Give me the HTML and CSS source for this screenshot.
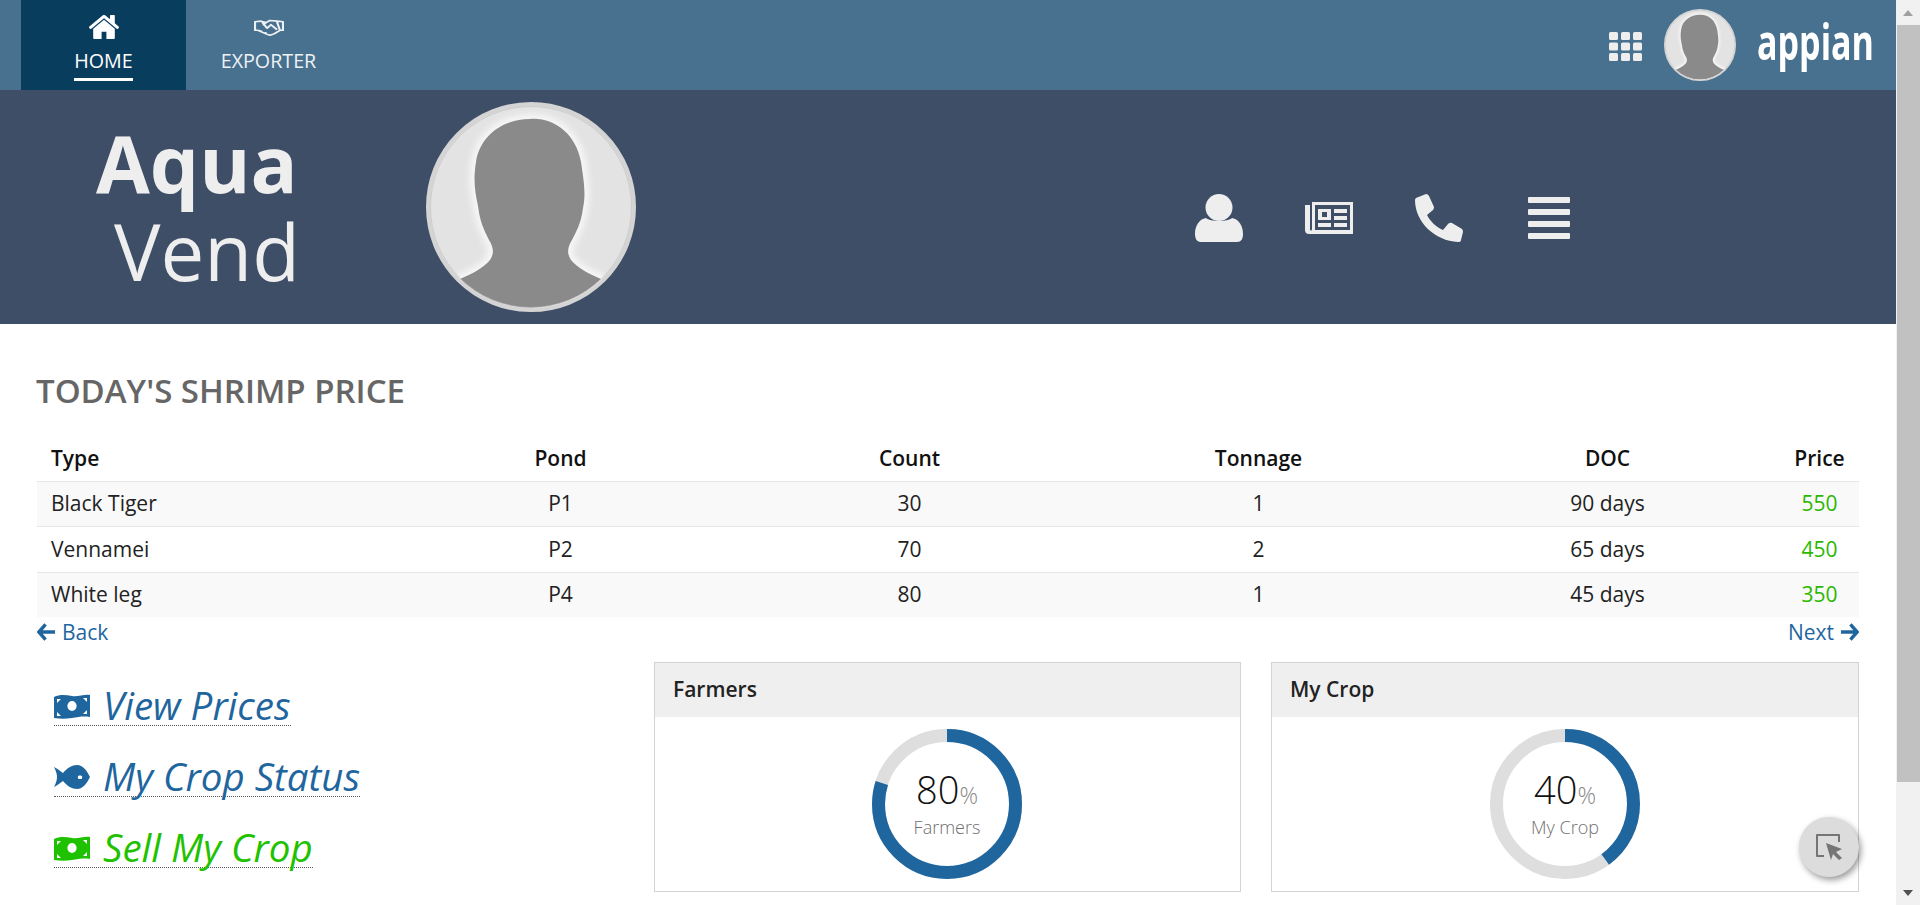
FILE: index.html
```html
<!DOCTYPE html>
<html lang="en">
<head>
    <meta charset="UTF-8">
    <meta name="viewport" content="width=device-width, initial-scale=1.0">
    <title>Aqua Vend</title>
    <link rel="stylesheet" href="styles.css">
</head>
<body>
    <svg class="defs" width="0" height="0">
        <filter id="soft" x="-20%" y="-20%" width="140%" height="140%"><feGaussianBlur stdDeviation="3"/></filter>
        <clipPath id="avatarClip"><circle cx="105" cy="105" r="101"/></clipPath>
        <symbol id="avatar" viewBox="0 0 210 210">
            <circle cx="105" cy="105" r="103" fill="#e3e3e3" stroke="#d4d4d4" stroke-width="4"/>
            <g clip-path="url(#avatarClip)">
                <path d="M104 17C128 15 150 32 155 60C158 80 160 92 157 106C155 122 150 130 146 138C141 146 141 152 145 158C152 166 163 172 175 177L175 215H34L34 177C46 172 57 166 64 158C68 152 68 146 63 138C58 128 54 120 52 104C49 90 47 78 50 60C54 33 78 17 104 17Z" fill="#f6f6f6" stroke="#f6f6f6" stroke-width="10" filter="url(#soft)"/>
                <path d="M104 17C128 15 150 32 155 60C158 80 160 92 157 106C155 122 150 130 146 138C141 146 141 152 145 158C152 166 163 172 175 177A101 101 0 0 1 34 177C46 172 57 166 64 158C68 152 68 146 63 138C58 128 54 120 52 104C49 90 47 78 50 60C54 33 78 17 104 17Z" fill="#8a8a8a"/>
            </g>
            <circle cx="105" cy="105" r="100.500" fill="none" stroke="#bdbdbd" stroke-width="0.6"/>
        </symbol>
        <symbol id="money" viewBox="0 0 36 26">
            <path fill-rule="evenodd" d="M0 4C6 1 12 2 18 3C24 4 30 1 36 2V24C30 23 24 24 18 25C12 26 6 26 0 25ZM18 8A4.600 5 0 1 0 18 18A4.600 5 0 1 0 18 8ZM3 6V10L7 6ZM33 5H29L33 9ZM3 19V23H7ZM33 17L29 21H33Z"/>
        </symbol>
    </svg>

    <div class="page">
        <nav class="topbar">
            <a class="tab tab-active">
                <div class="tab-icon-box">
                    <svg class="tab-icon" viewBox="96 256 1600 1280"><path d="M1472 992v480q0 26-19 45t-45 19h-384v-384h-256v384h-384q-26 0-45-19t-19-45v-480q0-1 .5-3t.5-3l575-474 575 474q1 2 1 6zm223-69l-62 74q-8 9-21 11h-3q-13 0-21-7l-692-577-692 577q-12 8-24 7-13-2-21-11l-62-74q-8-10-7-23.5t11-21.5l719-599q32-26 76-26t76 26l244 204v-195q0-14 9-23t23-9h192q14 0 23 9t9 23v408l219 182q10 8 11 21.5t-7 23.5z"/></svg>
                </div>
                <span class="tab-label">HOME</span>
            </a>
            <a class="tab">
                <div class="tab-icon-box">
                    <svg class="tab-icon-shake" viewBox="0 0 30 24" preserveAspectRatio="none"><path d="M1 4L7 3L12 5L16 2L23 3L29 4V16L26 16L20 21L16 23L12 21L4 16L1 16ZM8 4L13 13L17 8L23 15M12 5L9 9M5 16L8 18M11 19L13 21M23 4L26 16" fill="none" stroke="#eef2f5" stroke-width="2.200" stroke-linejoin="round"/></svg>
                </div>
                <span class="tab-label">EXPORTER</span>
            </a>
            <div class="topbar-right">
                <svg class="grid-icon" viewBox="0 0 33 29"><rect x="0" y="0" width="9" height="8" rx="1.500"/><rect x="12" y="0" width="9" height="8" rx="1.500"/><rect x="24" y="0" width="9" height="8" rx="1.500"/><rect x="0" y="10.500" width="9" height="8" rx="1.500"/><rect x="12" y="10.500" width="9" height="8" rx="1.500"/><rect x="24" y="10.500" width="9" height="8" rx="1.500"/><rect x="0" y="21" width="9" height="8" rx="1.500"/><rect x="12" y="21" width="9" height="8" rx="1.500"/><rect x="24" y="21" width="9" height="8" rx="1.500"/></svg>
                <svg class="avatar-small"><use href="#avatar"/></svg>
                <div class="logo"><span class="logo-text">appian</span></div>
            </div>
        </nav>

        <header class="banner">
            <div class="brand">
                <div class="brand-top">Aqua</div>
                <div class="brand-bottom">Vend</div>
            </div>
            <svg class="avatar-big"><use href="#avatar"/></svg>
            <div class="banner-icons">
                <svg class="banner-icon" viewBox="0 0 48 48"><ellipse cx="24" cy="13.500" rx="13.500" ry="13.500"/><path d="M0 40C0 32 4 25 11 24C15 28 33 28 37 24C44 25 48 32 48 40C48 45 46 48 42 48H6C2 48 0 45 0 40Z"/></svg>
                <svg class="banner-icon" viewBox="0 0 48 48"><path fill-rule="evenodd" d="M7 8H48V40H4C1 40 0 38 0 36V11H5V35C5 37 7 37 7 35ZM10 11V36H45V11Z"/><path fill-rule="evenodd" d="M13 15H26V26H13ZM17 18V23H22V18Z"/><rect x="29" y="15" width="13" height="4"/><rect x="29" y="22" width="13" height="4"/><rect x="13" y="29" width="13" height="4"/><rect x="29" y="29" width="13" height="4"/></svg>
                <svg class="banner-icon" viewBox="0 0 48 48"><path d="M1 4L11 0Q13 0 14 2L19 13Q19 15 18 16L12 21C15 27 21 33 28 36L33 30Q35 28 37 29L47 35Q48 36 48 38L46 46Q46 48 43 48C20 47 0 28 0 6Q0 5 1 4Z"/></svg>
                <svg class="banner-icon" viewBox="0 0 48 48"><rect x="3" y="3" width="42" height="6" rx="1"/><rect x="3" y="15" width="42" height="6" rx="1"/><rect x="3" y="27" width="42" height="6" rx="1"/><rect x="3" y="39" width="42" height="6" rx="1"/></svg>
            </div>
        </header>

        <main class="content">
            <h2 class="title">TODAY'S SHRIMP PRICE</h2>

            <table class="price-table">
                <colgroup>
                    <col class="col-wide"><col class="col-wide"><col class="col-wide"><col class="col-wide"><col class="col-wide"><col>
                </colgroup>
                <thead>
                    <tr><th class="left">Type</th><th>Pond</th><th>Count</th><th>Tonnage</th><th>DOC</th><th class="price-head">Price</th></tr>
                </thead>
                <tbody>
                    <tr><td class="left">Black Tiger</td><td>P1</td><td>30</td><td>1</td><td>90 days</td><td class="price">550</td></tr>
                    <tr><td class="left">Vennamei</td><td>P2</td><td>70</td><td>2</td><td>65 days</td><td class="price">450</td></tr>
                    <tr><td class="left">White leg</td><td>P4</td><td>80</td><td>1</td><td>45 days</td><td class="price">350</td></tr>
                </tbody>
            </table>

            <div class="pager">
                <a class="pager-link">
                    <svg class="arrow" viewBox="0 0 20 18"><path d="M9 1L2 9L9 17M2 9H19" fill="none" stroke="currentColor" stroke-width="3.600"/></svg>
                    Back
                </a>
                <a class="pager-link">
                    Next
                    <svg class="arrow" viewBox="0 0 20 18"><path d="M11 1L18 9L11 17M18 9H1" fill="none" stroke="currentColor" stroke-width="3.600"/></svg>
                </a>
            </div>

            <div class="lower">
                <div class="links">
                    <a class="big-link">
                        <svg class="link-icon"><use href="#money"/></svg>
                        View Prices
                    </a>
                    <a class="big-link">
                        <svg class="link-icon" viewBox="0 0 36 26"><path fill-rule="evenodd" d="M0 3C4 5 6 7 9 9C13 4 18 1 23 1C29 1 33 7 36 13C33 19 29 25 23 25C18 25 13 22 9 17C6 19 4 21 0 23C2 19 3 16 3 13C3 10 2 7 0 3ZM26 11.500A1.800 1.800 0 1 0 26 15A1.800 1.800 0 1 0 26 11.500Z"/></svg>
                        My Crop Status
                    </a>
                    <a class="big-link big-link-green">
                        <svg class="link-icon"><use href="#money"/></svg>
                        Sell My Crop
                    </a>
                </div>

                <section class="card card-first">
                    <h3 class="card-head">Farmers</h3>
                    <div class="card-body">
                        <div class="donut">
                            <svg class="donut-ring" viewBox="0 0 150 150">
                                <circle class="ring-back" cx="75" cy="75" r="68.500"/>
                                <circle class="ring-value" cx="75" cy="75" r="68.500" pathLength="100" stroke-dasharray="80 100"/>
                            </svg>
                            <div class="donut-text">
                                <div class="donut-num">80<span class="donut-pct">%</span></div>
                                <div class="donut-label">Farmers</div>
                            </div>
                        </div>
                    </div>
                </section>

                <section class="card card-last">
                    <h3 class="card-head">My Crop</h3>
                    <div class="card-body">
                        <div class="donut">
                            <svg class="donut-ring" viewBox="0 0 150 150">
                                <circle class="ring-back" cx="75" cy="75" r="68.500"/>
                                <circle class="ring-value" cx="75" cy="75" r="68.500" pathLength="100" stroke-dasharray="40 100"/>
                            </svg>
                            <div class="donut-text">
                                <div class="donut-num">40<span class="donut-pct">%</span></div>
                                <div class="donut-label">My Crop</div>
                            </div>
                        </div>
                    </div>
                </section>
            </div>

            <button class="fab">
                <svg viewBox="0 0 28 28" width="28" height="28"><path d="M9 23H2V2H24V9" fill="none" stroke="#757575" stroke-width="2" stroke-linejoin="round"/><path d="M11 10L27 16L21 19L27 25L24 27L18 21L16 27Z" fill="#757575"/></svg>
            </button>
        </main>
    </div>

    <div class="scrollbar">
        <div class="scroll-btn"><span class="arrow-up"></span></div>
        <div class="scroll-thumb"></div>
        <div class="scroll-track"></div>
        <div class="scroll-btn"><span class="arrow-down"></span></div>
    </div>
</body>
</html>
```

FILE: styles.css
```css
html, body { height: 100%; overflow: hidden; }
body {
    margin: 0;
    display: flex;
    font-family: "Open Sans", "Noto Sans", sans-serif;
    font-size: 21px;
    color: #222;
    background: #fff;
}
.defs { display: block; height: 0; width: 0; flex: none; }
.page { flex: 1; min-width: 0; display: flex; flex-direction: column; }

/* top nav */
.topbar {
    height: 90px;
    flex: none;
    display: flex;
    padding-left: 21px;
    background: #48708f;
}
.tab {
    width: 165px;
    display: flex;
    flex-direction: column;
    align-items: center;
    color: #eef2f5;
    font-size: 19.700px;
}
.tab-active { background: #083d5e; color: #fff; }
.tab-icon-box { height: 24px; margin-top: 15px; display: flex; align-items: center; flex: none; }
.tab-icon { width: 30px; height: 24px; fill: #fff; }
.tab-icon-shake { width: 30px; height: 17px; }
.tab-label { margin-top: 7px; line-height: 30px; padding-bottom: 2px; }
.tab-active .tab-label { border-bottom: 3px solid #fff; }
.topbar-right { margin-left: auto; display: flex; align-items: center; padding-right: 22px; }
.grid-icon { width: 33px; height: 29px; fill: #eee; margin-right: 22px; margin-top: 3px; }
.avatar-small { width: 72px; height: 72px; margin-right: 21px; }
.logo { width: 117px; height: 70px; margin-bottom: 8px; }
.logo-text {
    display: block;
    width: max-content;
    font-weight: 700;
    font-size: 50px;
    line-height: 70px;
    color: #fff;
    transform: scaleX(0.681);
    transform-origin: left center;
}

/* banner */
.banner {
    height: 234px;
    flex: none;
    display: flex;
    align-items: center;
    background: #3e4e67;
    color: #eee;
}
.brand { width: 426px; padding-left: 96px; box-sizing: border-box; font-size: 78px; line-height: 88px; }
.brand-top { font-weight: 700; }
.brand-bottom { font-weight: 400; padding-left: 18px; }
.avatar-big { width: 210px; height: 210px; }
.banner-icons { display: flex; gap: 62px; margin-left: 559px; margin-top: 22px; }
.banner-icon { width: 48px; height: 48px; fill: #eee; }

/* main content */
.content { position: relative; flex: 1; padding: 47px 37px 0 37px; }
.title { margin: 0 0 0 -1px; font-size: 33px; line-height: 40px; font-weight: 600; color: #666; }
.price-table {
    width: 100%;
    margin-top: 25px;
    border-collapse: collapse;
    table-layout: fixed;
}
.col-wide { width: 349px; }
.price-table th, .price-table td {
    box-sizing: border-box;
    height: 45px;
    padding: 0;
    text-align: center;
    font-weight: 400;
    white-space: nowrap;
}
.price-table th { font-weight: 600; color: #111; }
.price-table td { border-top: 1px solid #e6e6e6; padding-bottom: 1px; }
.price-table .left { text-align: left; padding-left: 14px; }
.price-table tbody tr:nth-child(odd) { background: #f9f9f9; }
.price-table tbody tr:nth-child(2) td { height: 46px; }
.price-table .price { color: #2cb800; padding-right: 2px; }
.price-table .price-head { padding-right: 2px; }
.pager { display: flex; justify-content: space-between; line-height: 30px; color: #1f669f; }
.pager-link { display: flex; align-items: center; gap: 6px; }
.arrow { width: 19px; height: 18px; }

.lower { display: flex; margin-top: 15px; }
.links { width: 617px; flex: none; padding: 13px 0 0 17px; box-sizing: border-box; }
.big-link {
    display: flex;
    align-items: center;
    width: max-content;
    height: 40px;
    padding-top: 10px;
    margin-bottom: 20px;
    font-size: 38.500px;
    font-style: italic;
    font-weight: 400;
    color: #1f669f;
    border-bottom: 1px dotted #555;
}
.big-link-green { color: #1fc200; }
.link-icon { width: 36px; height: 26px; margin-right: 13px; margin-top: 2px; fill: currentColor; }

.card { width: 587px; flex: none; height: 230px; margin-right: 30px; border: 1px solid #d3d3d3; box-sizing: border-box; }
.card-first .card-body { padding-right: 1px; }
.card-last { width: 588px; margin-right: 0; }
.card-head {
    margin: 0;
    height: 54px;
    padding-left: 18px;
    background: #efefef;
    font-size: 21px;
    font-weight: 600;
    line-height: 52px;
    color: #222;
}
.card-body { display: flex; justify-content: center; padding-top: 12px; }
.donut { position: relative; width: 150px; height: 150px; }
.donut-ring { display: block; width: 150px; height: 150px; transform: rotate(-90deg); }
.ring-back, .ring-value { fill: none; stroke-width: 13; }
.ring-back { stroke: #dedede; }
.ring-value { stroke: #1f669f; }
.donut-text {
    position: absolute;
    top: 0;
    left: 0;
    right: 0;
    bottom: 0;
    text-align: center;
}
.donut-num { margin-top: 35px; font-size: 38px; line-height: 50px; font-weight: 300; color: #111; }
.donut-pct { font-size: 23px; color: #888; }
.donut-label { margin-top: -5px; font-size: 18px; line-height: 24px; font-weight: 300; color: #707070; }

.fab {
    position: absolute;
    right: 37px;
    bottom: 28px;
    width: 60px;
    height: 60px;
    padding: 0;
    display: flex;
    align-items: center;
    justify-content: center;
    border: none;
    border-radius: 50%;
    background: #dcdcdc;
    box-shadow: 2px 3px 6px rgba(0,0,0,0.4);
}

/* page scrollbar */
.scrollbar { width: 24px; flex: none; display: flex; flex-direction: column; background: #f1f1f1; }
.scroll-btn { height: 25px; flex: none; display: flex; align-items: center; justify-content: center; }
.scroll-thumb { height: 757px; flex: none; background: #c1c1c1; margin-left: 1px; }
.scroll-track { flex: 1; }
.arrow-up { border: 5px solid transparent; border-top: none; border-bottom: 6px solid #a0a0a0; }
.arrow-down { border: 5px solid transparent; border-bottom: none; border-top: 6px solid #505050; }
```
